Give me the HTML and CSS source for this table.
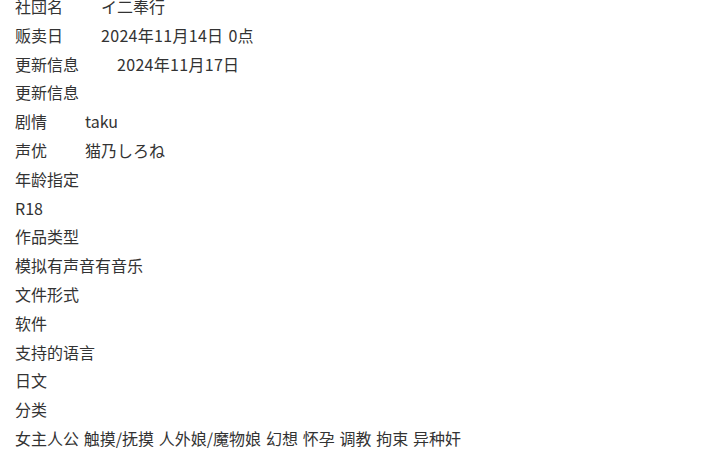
FILE: index.html
```html
<!DOCTYPE html>
<html lang="zh">
<head>
  <meta charset="UTF-8" />
  <meta name="viewport" content="width=device-width, initial-scale=1.0" />
  <title>作品信息</title>
  <link rel="stylesheet" href="styles.css">
</head>
<body>
  <div class="info">
    <div class="row"><span class="label">社団名</span><span>イ二奉行</span></div>
    <div class="row"><span class="label">贩卖日</span><span class="num">2024年11月14日 0点</span></div>
    <div class="row"><span class="label">更新信息</span><span class="num">2024年11月17日</span></div>
    <div class="row">更新信息</div>
    <div class="row"><span class="label">剧情</span><span>taku</span></div>
    <div class="row"><span class="label">声优</span><span>猫乃しろね</span></div>
    <div class="row">年龄指定</div>
    <div class="row">R18</div>
    <div class="row">作品类型</div>
    <div class="row">模拟有声音有音乐</div>
    <div class="row">文件形式</div>
    <div class="row">软件</div>
    <div class="row">支持的语言</div>
    <div class="row">日文</div>
    <div class="row">分类</div>
    <div class="row">女主人公 触摸/抚摸 人外娘/魔物娘 幻想 怀孕 调教 拘束 异种奸</div>
  </div>
</body>
</html>
```

FILE: styles.css
```css
body {
  margin: 0;
  background-color: #fff;
  color: #333;
  font-family: "Noto Sans CJK SC", "Noto Sans", sans-serif;
  font-size: 16px;
}
.info {
  margin-top: -8px;
  padding-left: 15px;
}
.row {
  line-height: 28.8px;
  white-space: nowrap;
  word-spacing: 1.2px;
}
.label {
  margin-right: 38px;
}
.num {
  letter-spacing: 0.3px;
}
```
